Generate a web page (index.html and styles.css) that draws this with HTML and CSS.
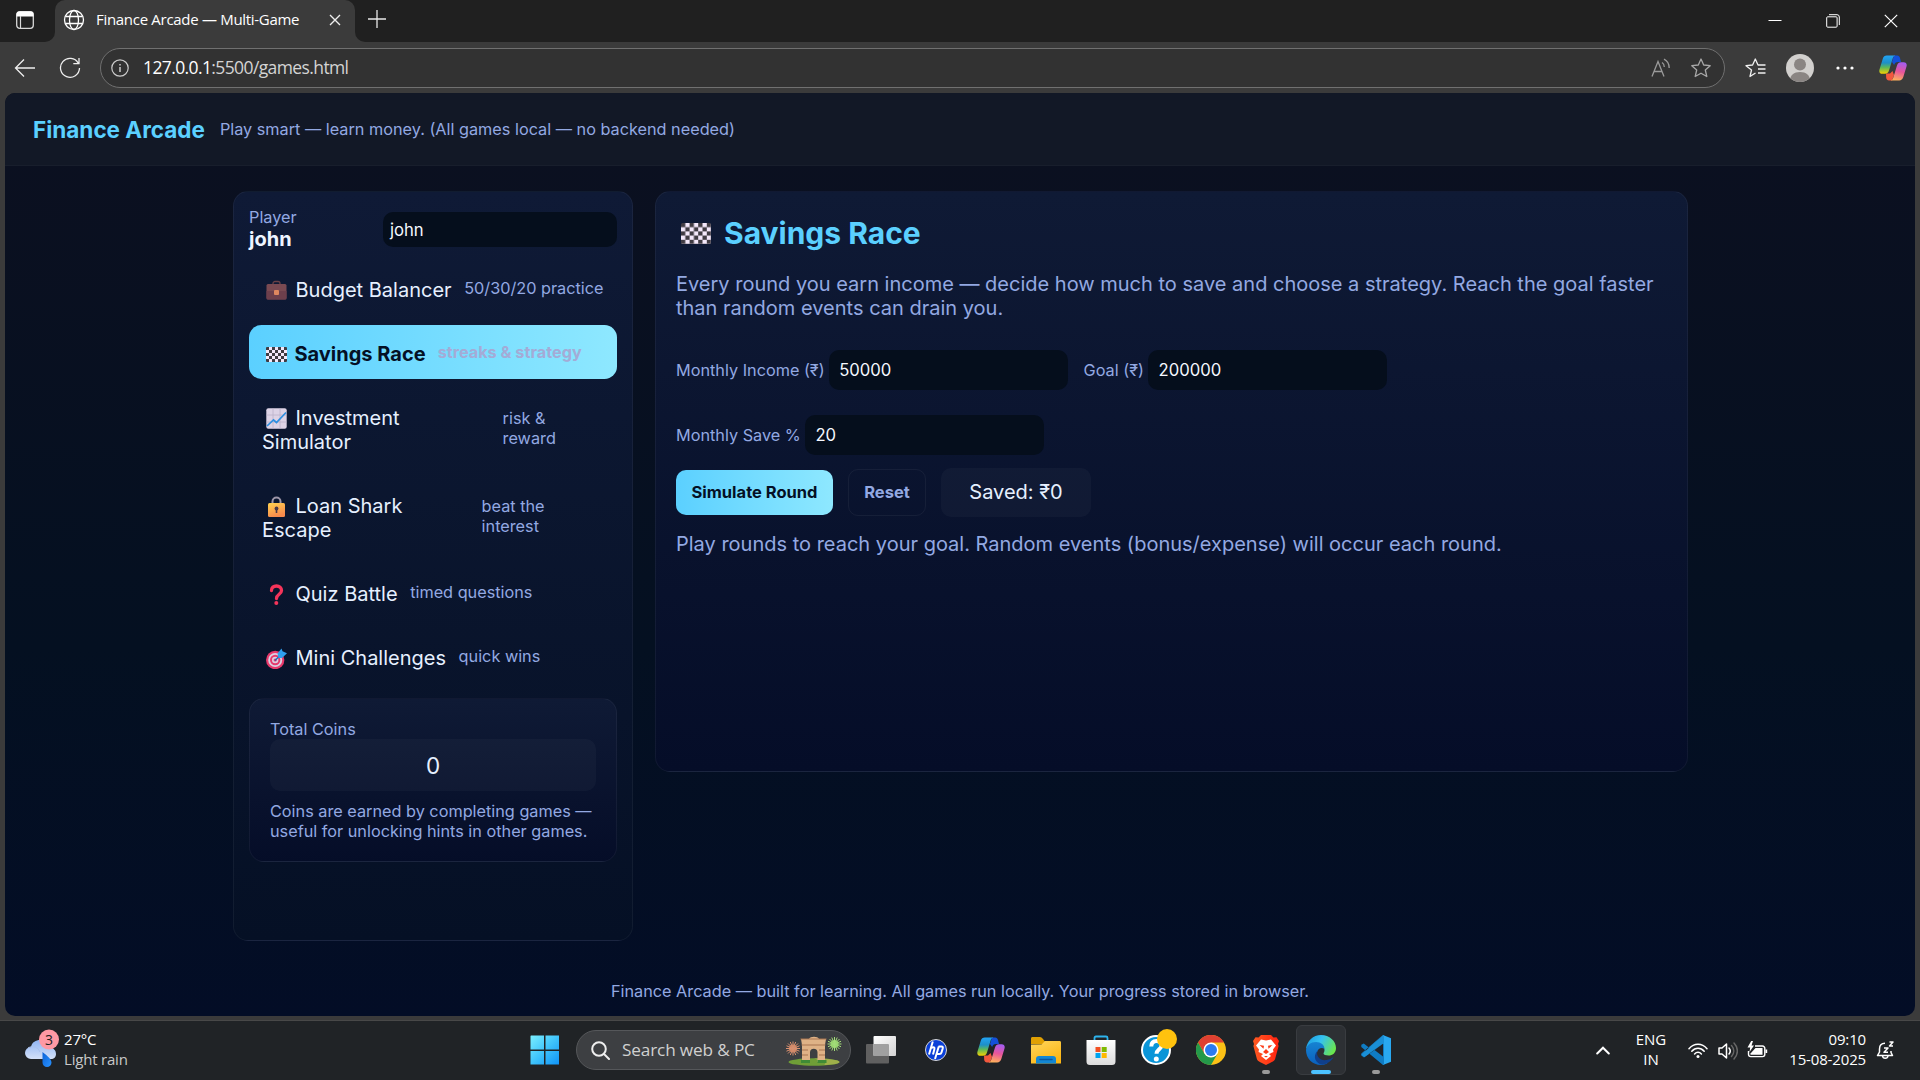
FILE: index.html
```html
<!DOCTYPE html>
<html lang="en">
<head>
<meta charset="utf-8">
<title>Finance Arcade — Multi-Game</title>
<link rel="stylesheet" href="styles.css">
</head>
<body>
<svg class="defs" width="0" height="0" aria-hidden="true">
  <defs>
    <linearGradient id="cpA" x1="0" y1="0" x2="0" y2="1"><stop offset="0" stop-color="#22a4f5"/><stop offset=".4" stop-color="#1d8fc9"/><stop offset=".65" stop-color="#5cb85a"/><stop offset="1" stop-color="#f5d000"/></linearGradient>
    <linearGradient id="cpB" x1=".6" y1="0" x2=".4" y2="1"><stop offset="0" stop-color="#a55cf0"/><stop offset=".5" stop-color="#e8559a"/><stop offset="1" stop-color="#ffb05c"/></linearGradient>
    <symbol id="copilot" viewBox="0 0 28 26">
      <path d="M15 .5h3.2c1.6 0 2.3 1 2.8 2.500L22 7h-3c-2.200 0-3.200 1-3.900 3L13 7z" fill="#1450d8"/>
      <path d="M7 18.500h4L13.500 16 15 20l-2 5.500H10c-1.600 0-2.400-1-2.800-2.500z" fill="#f2583e"/>
      <path d="M7.800.5h8.500c-1.500.4-2.100 1.300-2.700 3.200L10 15.600c-.8 2.400-2 3.200-4 3.200H3.300C.8 18.800-.2 16.900.5 14.500L3.700 3.900C4.500 1.500 5.700.5 7.800.5z" fill="url(#cpA)"/>
      <path d="M20.200 25.500h-8.500c1.500-.4 2.100-1.300 2.700-3.200L18 10.400c.8-2.400 2-3.200 4-3.200h2.700c2.500 0 3.500 1.900 2.800 4.300l-3.200 10.600c-.8 2.400-2 3.400-4.100 3.400z" fill="url(#cpB)"/>
    </symbol>
    <pattern id="check" width="6" height="6" patternUnits="userSpaceOnUse"><path d="M0 0h6v6H0z" fill="#f4e8fa"/><path d="M0 0h3v3H0zM3 3h3v3H3z" fill="#403b42"/></pattern>
    <symbol id="flag" viewBox="0 0 21 15"><rect width="21" height="15" rx="1" fill="url(#check)"/></symbol>
    <pattern id="checkBig" width="8.600" height="8.400" patternUnits="userSpaceOnUse"><path d="M0 0h8.600v8.400H0z" fill="#403b42"/><path d="M4.300 0h4.300v4.200H4.300zM0 4.200h4.300v4.200H0z" fill="#f4e8fa"/></pattern>
  </defs>
</svg>

<div class="tabstrip">
  <div class="workspaces"><svg width="20" height="20" viewBox="0 0 20 20"><rect x="1.700" y="1.700" width="16.600" height="16.600" rx="3" fill="none" stroke="#d8d8d8" stroke-width="1.300"/><path d="M1.500 6.500V4.500a3 3 0 0 1 3-3h11a3 3 0 0 1 3 3v2z" fill="#fff"/><path d="M5.500 6v12" stroke="#d8d8d8" stroke-width="1.200"/></svg></div>
  <div class="tab">
    <svg width="22" height="22" viewBox="0 0 22 22" fill="none" stroke="#fff" stroke-width="1.300"><circle cx="11" cy="11" r="9.500"/><ellipse cx="11" cy="11" rx="4.500" ry="9.500"/><path d="M2.500 7.500h17M2.500 14.500h17"/></svg>
    <span class="tab-title">Finance Arcade — Multi-Game</span>
    <svg class="tab-close" width="12" height="12" viewBox="0 0 12 12" stroke="#eee" stroke-width="1.400"><path d="M1 1l10 10M11 1L1 11"/></svg>
  </div>
  <svg class="newtab" width="18" height="18" viewBox="0 0 18 18" stroke="#e8e8e8" stroke-width="1.300"><path d="M9 0v18M0 9h18"/></svg>
  <div class="winctl">
    <svg width="14" height="14" viewBox="0 0 14 14" stroke="#fff" stroke-width="1"><path d="M.5 6.500h13"/></svg>
    <svg width="14" height="14" viewBox="0 0 14 14" fill="none" stroke="#fff"><rect x=".7" y="2.800" width="10.400" height="10.400" rx="1"/><path d="M3 .7h8a2.300 2.300 0 0 1 2.300 2.300v8"/></svg>
    <svg width="14" height="14" viewBox="0 0 14 14" stroke="#fff" stroke-width="1.200"><path d="M.8.8l12.400 12.400M13.200.8L.8 13.200"/></svg>
  </div>
</div>

<div class="toolbar">
  <svg class="back" width="22" height="20" viewBox="0 0 22 20" fill="none" stroke="#eee" stroke-width="1.300"><path d="M21 10H1.500M10 1.500L1.500 10l8.500 8.500"/></svg>
  <svg class="reload" width="22" height="22" viewBox="0 0 22 22" fill="none" stroke="#eee" stroke-width="1.300"><path d="M19.300 6.200A9.500 9.500 0 1 0 20.500 11M20 1v5.700h-5.700"/></svg>
  <div class="address">
    <svg width="18" height="18" viewBox="0 0 18 18" fill="none" stroke="#ccc" stroke-width="1.200"><circle cx="9" cy="9" r="8.200"/><path d="M9 8v5M9 5v1.500" stroke-width="1.500"/></svg>
    <span class="url"><b>127.0.0.1</b>:5500/games.html</span>
    <svg class="read" width="20" height="20" viewBox="0 0 20 20" fill="none" stroke="#9a9a9a" stroke-width="1.300"><path d="M1 18.500L7 3.500l6 15M3 13.500h8M11 4.500c1.600 1 2.300 2.400 2.300 4.500M13 1.200c3.500 1.800 5.200 4.500 5.200 8.800"/></svg>
    <svg class="star" width="20" height="20" viewBox="0 0 20 20" fill="none" stroke="#a8a8a8" stroke-width="1.300" stroke-linejoin="round"><path d="M10 1l2.700 6 6.500.7-4.900 4.300 1.500 6.500L10 15.200 4.200 18.500 5.700 12 .8 7.700 7.300 7z"/></svg>
  </div>
  <svg class="favs" width="21" height="20" viewBox="0 0 21 20" fill="none" stroke="#f0f0f0" stroke-width="1.300" stroke-linejoin="round"><path d="M10.500 15L5 18.500 6.500 12 1 7.700 7.600 7 10.300 1 13 7h7.500M13 11h7.500M13 15h7.500"/></svg>
  <svg class="avatar" width="28" height="28" viewBox="0 0 28 28"><clipPath id="av"><circle cx="14" cy="14" r="14"/></clipPath><g clip-path="url(#av)"><path d="M0 0h28v28H0z" fill="#d2d0ce"/><circle cx="14" cy="10.500" r="6" fill="#8a8583"/><path d="M4 27c0-6 4-9 10-9s10 3 10 9v2H4z" fill="#8a8583"/></g></svg>
  <svg class="dots" width="18" height="4" viewBox="0 0 18 4" fill="#fff"><circle cx="2" cy="2" r="1.600"/><circle cx="9" cy="2" r="1.600"/><circle cx="16" cy="2" r="1.600"/></svg>
  <svg class="cp" width="28" height="26"><use href="#copilot"/></svg>
</div>

<div class="frame">
<div class="page">
  <header class="site-head"><h1>Finance Arcade</h1><span class="small">Play smart — learn money. (All games local — no backend needed)</span></header>
  <main class="layout">
    <aside class="panel side">
      <div class="player"><div class="who"><div class="small">Player</div><strong>john</strong></div><div class="field name">john</div></div>
      <nav class="nav">
        <div class="item"><div><svg class="emo" viewBox="0 0 21 21"><path d="M7 5V3.500a2 2 0 0 1 2-2h3a2 2 0 0 1 2 2V5" fill="none" stroke="#6b4146" stroke-width="1.300"/><rect x=".5" y="4" width="20" height="15.500" rx="1.500" fill="#7a4a52"/><path d="M.5 11h20v7a1.500 1.500 0 0 1-1.500 1.500H2A1.500 1.500 0 0 1 .5 18z" fill="#6d3f4c"/><rect x="8" y="10" width="5" height="5" rx="1" fill="#e0875f"/></svg>Budget Balancer</div><span class="small">50/30/20 practice</span></div>
        <div class="item active"><div><svg class="emo flag"><use href="#flag"/></svg>Savings Race</div><span class="small">streaks &amp; strategy</span></div>
        <div class="item two"><div class="w1"><svg class="emo" viewBox="0 0 21 21"><rect x=".3" y=".3" width="20.400" height="20.400" rx="2" fill="#ddd3e6"/><path d="M7 .5v20M14 .5v20M.5 7h20M.5 14h20" stroke="#bdb2c9" stroke-width=".8"/><path d="M1 18l6.500-6 3 2.500L20 4.500" fill="none" stroke="#2e8fe0" stroke-width="1.700"/></svg>Investment Simulator</div><span class="small s1">risk &amp; reward</span></div>
        <div class="item two"><div class="w2"><svg class="emo" viewBox="0 0 21 21"><path d="M6.500 8V5.500a4 4 0 0 1 8 0V8" fill="none" stroke="#9d96a8" stroke-width="2"/><linearGradient id="lk" x1="0" y1="0" x2=".4" y2="1"><stop offset="0" stop-color="#ffd24f"/><stop offset="1" stop-color="#f88a4c"/></linearGradient><rect x="2" y="7" width="17" height="14" rx="1.500" fill="url(#lk)"/><circle cx="10.500" cy="12.500" r="1.900" fill="#493747"/><path d="M9.700 13h1.600v4H9.700z" fill="#493747"/></svg>Loan Shark Escape</div><span class="small s2">beat the interest</span></div>
        <div class="item"><div><svg class="emo" viewBox="0 0 21 21"><path d="M5.500 6.500C5.500 3.500 7.500 2 10.500 2s5 1.800 5 4.500c0 4-5 3.500-5 8" fill="none" stroke="#f5345a" stroke-width="3.300" stroke-linecap="round"/><circle cx="10.300" cy="19" r="2" fill="#f5345a"/></svg>Quiz Battle</div><span class="small">timed questions</span></div>
        <div class="item"><div><svg class="emo" viewBox="0 0 21 21"><circle cx="9.200" cy="12" r="9.200" fill="#e8396b"/><circle cx="9.200" cy="12" r="7" fill="#dcd0e2"/><circle cx="9.200" cy="12" r="5.200" fill="#e8396b"/><circle cx="9.200" cy="12" r="3.200" fill="#dcd0e2"/><circle cx="9.200" cy="12" r="1.600" fill="#e8396b"/><path d="M9 12.500l6-6" stroke="#1565b5" stroke-width="1.300"/><path d="M11.500 5.500L15.500.5l1 2.800 4.500 2-5 4.700h-3.500z" fill="#2fa0ee"/></svg>Mini Challenges</div><span class="small">quick wins</span></div>
      </nav>
      <div class="panel coins"><div class="small">Total Coins</div><div class="count">0</div><div class="small note">Coins are earned by completing games — useful for unlocking hints in other games.</div></div>
    </aside>
    <section class="panel game">
      <h2><svg class="big-flag" viewBox="0 0 30 21"><rect width="30" height="21" rx="1.500" fill="url(#checkBig)"/></svg>Savings Race</h2>
      <p class="lead">Every round you earn income — decide how much to save and choose a strategy. Reach the goal faster than random events can drain you.</p>
      <div class="row"><label class="small">Monthly Income (₹)</label><div class="field num">50000</div><label class="small goal">Goal (₹)</label><div class="field num">200000</div></div>
      <div class="row second"><label class="small">Monthly Save %</label><div class="field num">20</div></div>
      <div class="row actions"><div class="btn primary">Simulate Round</div><div class="btn ghost">Reset</div><div class="saved">Saved: ₹0</div></div>
      <p class="status">Play rounds to reach your goal. Random events (bonus/expense) will occur each round.</p>
    </section>
  </main>
  <footer class="small">Finance Arcade — built for learning. All games run locally. Your progress stored in browser.</footer>
</div>
</div>

<div class="taskbar">
  <div class="weather">
    <svg width="36" height="38" viewBox="0 0 36 38"><defs><linearGradient id="cl" x1="0" y1="0" x2="0" y2="1"><stop offset="0" stop-color="#8fb4f3"/><stop offset="1" stop-color="#d3e0f8"/></linearGradient><linearGradient id="dr" x1="0" y1="0" x2="1" y2="1"><stop offset="0" stop-color="#0b62d8"/><stop offset="1" stop-color="#2a93ff"/></linearGradient></defs><path d="M6 30a6 6 0 0 1 0-12C7 13 11 11 15 11c6 0 9 3 9.500 7.500C29 19 31 21.500 31 25c0 3-2 5-5 5z" fill="url(#cl)"/><path d="M3 19c5-3 10-1 12 4" fill="none" stroke="#a9c1ee"/><path d="M17.500 23c5 4 9 7 9 10.500a4.200 4.200 0 0 1-9 0z" fill="url(#dr)"/><circle cx="24" cy="10.500" r="10" fill="#ff99a4"/><text x="24" y="15.500" text-anchor="middle" font-family="Open Sans, Noto Sans, sans-serif" font-size="14" fill="#222">3</text></svg>
    <div class="wtext"><div>27°C</div><div class="dim">Light rain</div></div>
  </div>
  <div class="apps">
    <div class="cell"><svg width="30" height="30" viewBox="0 0 30 30"><defs><linearGradient id="win" gradientUnits="userSpaceOnUse" x1="0" y1="0" x2="30" y2="30"><stop offset="0" stop-color="#7df0ff"/><stop offset=".5" stop-color="#3fc3fb"/><stop offset="1" stop-color="#0d91f7"/></linearGradient></defs><path d="M1 .5h13v14H.5V1zM15.500.5h13.500v14H15.500zM.5 16h13.500v13.500H.5zM15.500 16h13.500v13.500H15.500z" fill="url(#win)"/></svg></div>
    <div class="search">
      <svg width="19" height="19" viewBox="0 0 19 19" fill="none" stroke="#eee" stroke-width="2" stroke-linecap="round"><circle cx="8" cy="8" r="6.800"/><path d="M13 13l5 5"/></svg>
      <span>Search web &amp; PC</span>
      <svg width="56" height="32" viewBox="0 0 56 32"><ellipse cx="28" cy="28" rx="25.500" ry="3.700" fill="#6f9e37"/><path d="M28 24.500c14 0 25.500 1.500 25.500 3.500S44 31 38 31c5-3-6-5-10-6.500z" fill="#9fb04a"/><circle cx="7" cy="14.500" r="4" fill="#c97e5c"/><circle cx="48.500" cy="10" r="4" fill="#8cc863"/><g stroke="#d89070" stroke-width="1"><path d="M7 7.500v14M0 14.500h14M2 9.500l10 10M12 9.500l-10 10M4.300 8l5.400 13M9.700 8L4.300 21M.5 11.800l13 5.400M13.500 11.800l-13 5.400"/></g><g stroke="#a2dc78" stroke-width="1"><path d="M48.500 3v14M41.500 10h14M43.500 5l10 10M53.500 5l-10 10M45.800 3.500l5.400 13M51.200 3.500l-5.400 13M42 7.300l13 5.400M55 7.300l-13 5.400"/></g><path d="M15 5h8c1-3 9-3 10 0h7l-1 6v17h-7.500V18a3.800 3.800 0 0 0-7.500 0v10H16V11z" fill="#dfb286"/><path d="M14.500 5h26M15.500 11h24M16 16h6M33 16h6M16 21h6M33 21h6" stroke="#a87550" stroke-width="1"/><path d="M15 29v-3h9v3zM31.500 29v-3h9v3z" fill="#3f8a36"/></svg>
    </div>
    <div class="cell"><svg width="30" height="30" viewBox="0 0 30 30"><defs><linearGradient id="tv" x1="0" y1="0" x2="1" y2="1"><stop offset="0" stop-color="#fff"/><stop offset="1" stop-color="#d2d2d2"/></linearGradient></defs><rect x="0" y="9" width="23" height="19.500" rx="1" fill="#606060"/><rect x="7.500" y="1" width="22.500" height="20" rx="1" fill="url(#tv)"/><path d="M7.500 9H22a1 1 0 0 1 1 1v11H7.500z" fill="#a0a0a0"/></svg></div>
    <div class="cell"><svg width="22" height="22" viewBox="0 0 22 22"><circle cx="11" cy="11" r="10.500" fill="#0a3fd8" stroke="#d8d8d8"/><g fill="none" stroke="#fff" stroke-width="2"><path d="M7.800 2.500L4 15.500M6 9c3-1.300 4-.6 3.300 1.500L8 15.500M13.800 7.500L10 20M13.500 7.500h3c1.300 0 1.500.8 1.200 2l-1.200 4c-.3 1-.9 1.500-2 1.500h-2.300"/></g></svg></div>
    <div class="cell"><svg width="28" height="26"><use href="#copilot"/></svg></div>
    <div class="cell"><svg width="30" height="28" viewBox="0 0 30 28"><defs><linearGradient id="fo" x1="0" y1="0" x2=".6" y2="1"><stop offset="0" stop-color="#ffd75e"/><stop offset="1" stop-color="#fbb615"/></linearGradient></defs><path d="M0 8V2.500C0 1.500.7 1 1.500 1H9c1 0 2 .7 3 2l1.500 2H28v4z" fill="#e0a003"/><path d="M0 8.500h10.500L14 5h14.500c1 0 1.500.6 1.500 1.500V27.500H0z" fill="url(#fo)"/><path d="M5 27.500V23c0-2 1-3 3-3h14c2 0 3 1 3 3v4.500z" fill="#1387d3"/><path d="M9 23.500h12" stroke="#0a57a0" stroke-width="1.500" stroke-linecap="round"/></svg></div>
    <div class="cell"><svg width="30" height="30" viewBox="0 0 30 30"><defs><linearGradient id="sto" x1="0" y1="0" x2="0" y2="1"><stop offset="0" stop-color="#fff"/><stop offset="1" stop-color="#dcdcdc"/></linearGradient></defs><path d="M8.500 6.500V3c0-1 .5-1.500 1.500-1.500h10c1 0 1.500.5 1.500 1.500v3.500" fill="none" stroke="#2db4ee" stroke-width="1.800"/><path d="M.5 5h29v21.500a3.500 3.500 0 0 1-3.500 3.500H4A3.500 3.500 0 0 1 .5 26.500z" fill="url(#sto)"/><path d="M9.500 12h5v5h-5z" fill="#f25022"/><path d="M15.700 12h5v5h-5z" fill="#7fba00"/><path d="M9.500 18h5v5h-5z" fill="#00a4ef"/><path d="M15.700 18h5v5h-5z" fill="#ffb900"/></svg></div>
    <div class="cell"><svg class="help" width="36" height="36" viewBox="0 0 36 36"><circle cx="15" cy="21" r="14" fill="#0a95d8" stroke="#fff" stroke-width="2"/><path d="M10.300 17.500c0-4 2-5.500 5.200-5.500s5 2 5 4.700c0 3.500-5 3.800-5 8" fill="none" stroke="#fff" stroke-width="4"/><circle cx="15.300" cy="30" r="2.500" fill="#fff"/><circle cx="26" cy="10" r="10" fill="#ffc20e"/></svg></div>
    <div class="cell"><svg width="30" height="30" viewBox="0 0 30 30"><circle cx="15" cy="15" r="15" fill="#fbc116"/><path d="M2 7.500A15 15 0 0 1 28 7.500H15L8.500 18.700z" fill="#df4032"/><path d="M2 7.500A15 15 0 0 0 15 30l6.500-11.200-13 0z" fill="#24994a"/><circle cx="15" cy="15" r="7.500" fill="#fff"/><circle cx="15" cy="15" r="6" fill="#2b7bf0"/></svg></div>
    <div class="cell run"><svg width="26" height="30" viewBox="0 0 26 30"><defs><linearGradient id="br" x1="0" y1="0" x2="1" y2="0"><stop offset="0" stop-color="#ff5a22"/><stop offset="1" stop-color="#ff2210"/></linearGradient></defs><path d="M8 0h10l2.500 2.500 3-.3L26 6l-1 3 .6 2-3.500 13c-.5 1.500-1.500 2.500-9.100 6-7.600-3.500-8.600-4.500-9.100-6L.4 11 1 9 0 6l2.500-3.800 3 .3z" fill="url(#br)"/><path d="M8 4.500l5 1 5-1 5 6-3 4 .5 2.500-4.500 2 2 2-5 4-5-4 2-2-4.500-2 .5-2.500-3-4z" fill="#fff"/><path d="M6.500 10l4.500.7-.5 3zM19.500 10l-4.500.7.5 3zM10 17l3-3 3 3-3 2zM11 21h4l-2 1.500z" fill="#fc3b18"/></svg></div>
    <div class="cell active-app"><svg width="30" height="30" viewBox="0 0 30 30"><defs><linearGradient id="eg" x1="0" y1=".2" x2="1" y2=".6"><stop offset="0" stop-color="#1b9de2"/><stop offset=".45" stop-color="#35c1f1"/><stop offset="1" stop-color="#6be64c"/></linearGradient><linearGradient id="eb" x1="0" y1="0" x2="0" y2="1"><stop offset="0" stop-color="#1683d2"/><stop offset="1" stop-color="#0a60bd"/></linearGradient></defs><path d="M0 14C1 6 7 0 15 0c8.500 0 15 6 15 13 0 5-3.500 7.500-7.500 7.500-3 0-5-.8-5-2 0-.8 1-1.400 1-3.500 0-3-3-6-7.500-6C5 9 1 12 0 14z" fill="url(#eg)"/><path d="M0 15c.5-4.500 4.500-8 10-8 5 0 8.500 3 8.500 7-2.500-2-6.500-1-7.500 3.500C10 23 14 28 21.500 28 19.500 29.500 17 30 15 30 6.500 30 0 23.500 0 15z" fill="url(#eb)"/><path d="M11.500 15.500c-2 6 3 10.500 9 9.500 3-.5 5-1.500 7-3-2 4-6 7-11 7.700C10 29 6 22 11.500 15.500z" fill="#103f8b"/></svg></div>
    <div class="cell run"><svg width="30" height="30" viewBox="0 0 30 30"><path d="M22 0l8 3.300v23.400L22 30z" fill="#29a8f0"/><path d="M22 0L8.500 13 2.800 8.500.3 9.800v2.100L22 30l1-1V8.200L3 22.500.3 20.400v-2L22 0z" fill="#0f7cc4"/><path d="M22 8.500V21.500L13.500 15z" fill="#20242a"/><path d="M22 0l1-.2V8L3.500 22 .3 19.800z" fill="#1a8fd6"/></svg></div>
  </div>
  <div class="tray">
    <svg class="chev" width="14" height="9" viewBox="0 0 14 9" fill="none" stroke="#fff" stroke-width="2" stroke-linecap="round"><path d="M1.200 7.500L7 1.700l5.800 5.800"/></svg>
    <div class="lang"><div>ENG</div><div>IN</div></div>
    <svg class="wifi" width="20" height="16" viewBox="0 0 20 16" fill="none" stroke="#fff" stroke-width="1.500" stroke-linecap="round"><path d="M1 5.700C6-.2 14-.2 19 5.700M3.800 8.300c3.500-4 8.900-4 12.400 0M6.600 11c2-2.300 4.800-2.300 6.800 0"/><circle cx="10" cy="13.500" r="1.500" fill="#fff" stroke="none"/></svg>
    <svg class="vol" width="20" height="18" viewBox="0 0 20 18" fill="none" stroke="#fff" stroke-width="1.500" stroke-linecap="round" stroke-linejoin="round"><path d="M1 6h3l4.500-4v14L4 12H1zM11 6c1.500 1.800 1.500 4.200 0 6"/><path d="M13.500 3.500c3 3.300 3 7.700 0 11M16 1c4.500 4.800 4.500 11.200 0 16" stroke="#666"/></svg>
    <svg class="bat" width="21" height="18" viewBox="0 0 21 18"><path d="M8 5h7.500A2.300 2.300 0 0 1 17.800 7.300v6a2.300 2.300 0 0 1-2.300 2.300H3.800a2.300 2.300 0 0 1-2.300-2.300V10" fill="none" stroke="#fff" stroke-width="1.400"/><path d="M8.500 7h7v6.700H3.500V12.500z" fill="#fff"/><path d="M18.500 8.500h1.700v3.600h-1.700zM4.200 0L.5 6.500h2.700L2.500 11 7 4.500H4.500L6 0z" fill="#fff"/></svg>
    <div class="clock"><div>09:10</div><div>15-08-2025</div></div>
    <svg class="bell" width="19" height="20" viewBox="0 0 19 20" fill="none" stroke="#fff" stroke-width="1.500" stroke-linejoin="round"><path d="M9 3.200C5 3.200 3.500 6 3.500 9v3L1.500 15.500h15L15 12.500V11M6.500 16c.5 3 5 3 5.500 0M8 8h4l-4 4.200h4M13.500 2H17l-3.500 4H17"/></svg>
  </div>
</div>
</body>
</html>
```
FILE: styles.css
```css
* { box-sizing: border-box; }
body {
  margin: 0;
  width: 1920px;
  height: 1080px;
  overflow: hidden;
  display: flex;
  flex-direction: column;
  background: #3b3b3b;
  color: #e6f0ff;
  font-family: Inter, "Noto Sans", sans-serif;
  font-size: 20px;
  line-height: 24px;
}
svg { display: block; flex: none; }
.defs { position: absolute; }
h1, h2, p { margin: 0; }

/* Browser window */
.tabstrip, .toolbar, .taskbar { font-family: "Open Sans", "Noto Sans", sans-serif; }
.tabstrip { height: 42px; display: flex; background: linear-gradient(#202020 0 20px, #3b3b3b 20px); }
.workspaces {
  width: 55px;
  padding: 10px 0 0 15px;
  background: #202020;
  border-radius: 0 0 10px 0;
}
.tab {
  width: 300px;
  display: flex;
  align-items: center;
  padding: 0 14px 2px 8px;
  border-radius: 10px 10px 0 0;
  background: #3b3b3b;
}
.tab-title { margin: -2px 0 0 11px; flex: 1; font-size: 15px; color: #fff; white-space: nowrap; letter-spacing: -0.3px; }
.newtab { width: 40px; height: 42px; padding: 10px 9px 14px 13px; background: #202020; border-radius: 0 0 0 10px; }
.winctl {
  flex: 1;
  display: flex;
  justify-content: flex-end;
  gap: 44px;
  padding: 14px 22px 0 0;
  background: #202020;
}
.toolbar { height: 51px; display: flex; align-items: center; padding: 0 13px 0 14px; }
.reload { margin-left: 23px; }
.address {
  flex: 1;
  height: 40px;
  margin-left: 19px;
  padding: 0 13px 0 10px;
  display: flex;
  align-items: center;
  border: 1px solid #707070;
  border-radius: 20px;
  background: #323232;
}
.url { flex: 1; margin: -2px 0 0 14px; font-size: 17.5px; color: #d4d4d4; letter-spacing: -0.61px; }
.url b { font-weight: 400; color: #fff; }
.star { margin-left: 20px; }
.favs { margin-left: 20px; }
.avatar { margin-left: 20px; }
.dots { margin-left: 22px; }
.cp { margin-left: 25px; }

.frame { height: 928px; padding: 0 5px 4px; border-bottom: 1px solid #484848; }
.page {
  height: 923px;
  display: flex;
  flex-direction: column;
  border-radius: 10px;
  overflow: hidden;
  background: linear-gradient(180deg, #0c1020 0%, #041021 60%, #030d26 100%);
}

/* Finance Arcade */
.small { font-size: 16.25px; line-height: 20px; color: #93a9e2; }
.site-head {
  height: 73px;
  display: flex;
  align-items: center;
  gap: 15px;
  padding: 0 28px;
  background: #121826;
  border-bottom: 1px solid #181e2c;
}
h1 { padding-top: 1px; font-size: 22.5px; font-weight: 700; color: #5bd0ff; }
.layout { display: flex; align-items: flex-start; gap: 22px; padding: 25px 0 0 228px; }
.panel {
  border: 1px solid rgba(255, 255, 255, 0.05);
  border-radius: 15px;
  background: linear-gradient(180deg, #0f1a35, #050d28);
}
.side { width: 400px; height: 750px; padding: 15px; background: linear-gradient(180deg, #0f1a36, #051025); }
.player { display: flex; justify-content: space-between; align-items: center; height: 45px; }
.who { margin-top: -1px; }
.player strong { display: block; color: #eef4ff; }
.field { background: #050e1c; color: #f5f8ff; border-radius: 10px; font-size: 16.67px; display: flex; align-items: center; }
.name { width: 234px; height: 35px; padding-left: 7px; }
.nav { display: flex; flex-direction: column; gap: 10px; padding-top: 9px; }
.item { display: flex; gap: 12.6px; height: 54px; align-items: center; padding: 3px 13px 0; white-space: nowrap; border-radius: 12.5px; }
.item .small { margin-top: -4px; }
.item.two { height: 78px; white-space: normal; }
.item.two .small { margin-top: -3px; }
.item.active { gap: 12px; background: linear-gradient(90deg, #5bd0ff, #8ee8ff); color: #041025; font-weight: 650; }
.item.active .small { color: #a4abd6; font-weight: 700; }
.w1 { width: 228px; padding-right: 60px; }
.w2 { width: 207px; padding-right: 40px; }
.s1 { width: 80px; }
.s2 { width: 90px; }
.emo { display: inline-block; width: 21px; height: 21px; margin: 0 9px 0 3.5px; vertical-align: -4px; }
.flag { height: 15px; vertical-align: -1px; margin-right: 8px; }
.coins { margin-top: 15px; height: 164px; padding: 20px; }
.count {
  height: 52px;
  display: flex;
  align-items: center;
  justify-content: center;
  padding-top: 1px;
  font-size: 22.5px;
  border-radius: 10px;
  background: rgba(255, 255, 255, 0.03);
}
.note { margin-top: 10px; width: 330px; }
.game { width: 1033px; height: 581px; padding: 23px 20px; }
h2 { display: flex; align-items: center; height: 36px; font-size: 30px; font-weight: 700; color: #5bd0ff; }
.big-flag { width: 30px; height: 21px; margin: 0 13px 0 5px; }
.lead { margin-top: 21px; color: #93a9e2; }
.row { display: flex; align-items: center; height: 40px; margin-top: 30px; }
.num { width: 239px; height: 40px; margin-left: 4px; padding-left: 10.6px; }
.goal { margin-left: 16px; }
.second { margin-top: 25px; }
.actions { height: 49px; margin-top: 13px; gap: 15px; }
.btn { display: flex; align-items: center; justify-content: center; padding-bottom: 1px; border-radius: 10px; font-size: 16.5px; font-weight: 700; }
.primary { width: 157px; height: 45px; color: #041025; background: linear-gradient(90deg, #5bd0ff, #8ee8ff); }
.ghost { width: 78px; height: 47px; color: #93a9e2; border: 1px solid rgba(255, 255, 255, 0.05); }
.saved { width: 150px; height: 49px; display: flex; align-items: center; justify-content: center; padding-bottom: 1px; border-radius: 10px; background: rgba(255, 255, 255, 0.03); }
.status { margin-top: 15px; color: #93a9e2; }
footer { margin-top: 40px; text-align: center; }

/* Taskbar */
.taskbar {
  height: 59px;
  display: flex;
  align-items: center;
  background: #202326;
  color: #fff;
  font-size: 15px;
  line-height: 20px;
}
.weather { width: 520px; display: flex; align-items: center; padding-left: 25px; gap: 3px; letter-spacing: -0.2px; }
.weather svg { margin-top: -5px; }
.wtext { margin-top: -4px; }
.dim { color: #c8c8c8; }
.apps { width: 881px; display: flex; gap: 5px; margin-top: -1px; }
.cell { width: 50px; height: 50px; display: flex; align-items: center; justify-content: center; position: relative; border-radius: 6px; }
.help { margin: -6px 0 0 6px; }
.run::after, .active-app::after {
  content: "";
  position: absolute;
  bottom: 1px;
  left: 21px;
  width: 8px;
  height: 4px;
  border-radius: 2px;
  background: #9a9a9a;
}
.active-app { background: #2d3034; border: 1px solid #393c40; }
.active-app::after { left: 14px; bottom: 0; width: 20px; background: #4cc2ff; }
.search {
  width: 275px;
  height: 40px;
  margin: 5px 0 0 1px;
  padding: 0 8px 0 14px;
  display: flex;
  align-items: center;
  border: 1px solid #55575a;
  border-radius: 20px;
  background: #3d3f42;
}
.search span { flex: 1; margin-left: 12px; font-size: 17.2px; color: #d0d0d0; letter-spacing: -0.15px; white-space: nowrap; }
.tray { flex: 1; display: flex; align-items: center; padding-left: 195px; }
.lang { width: 60px; margin: -3px 0 0 11px; text-align: center; }
.wifi { margin-left: 7px; }
.vol { margin-left: 10px; }
.bat { margin: -2px 0 0 9px; }
.clock { width: 98px; margin-top: -4px; text-align: right; white-space: nowrap; letter-spacing: -0.15px; }
.bell { margin: -1px 0 0 10px; }
```
